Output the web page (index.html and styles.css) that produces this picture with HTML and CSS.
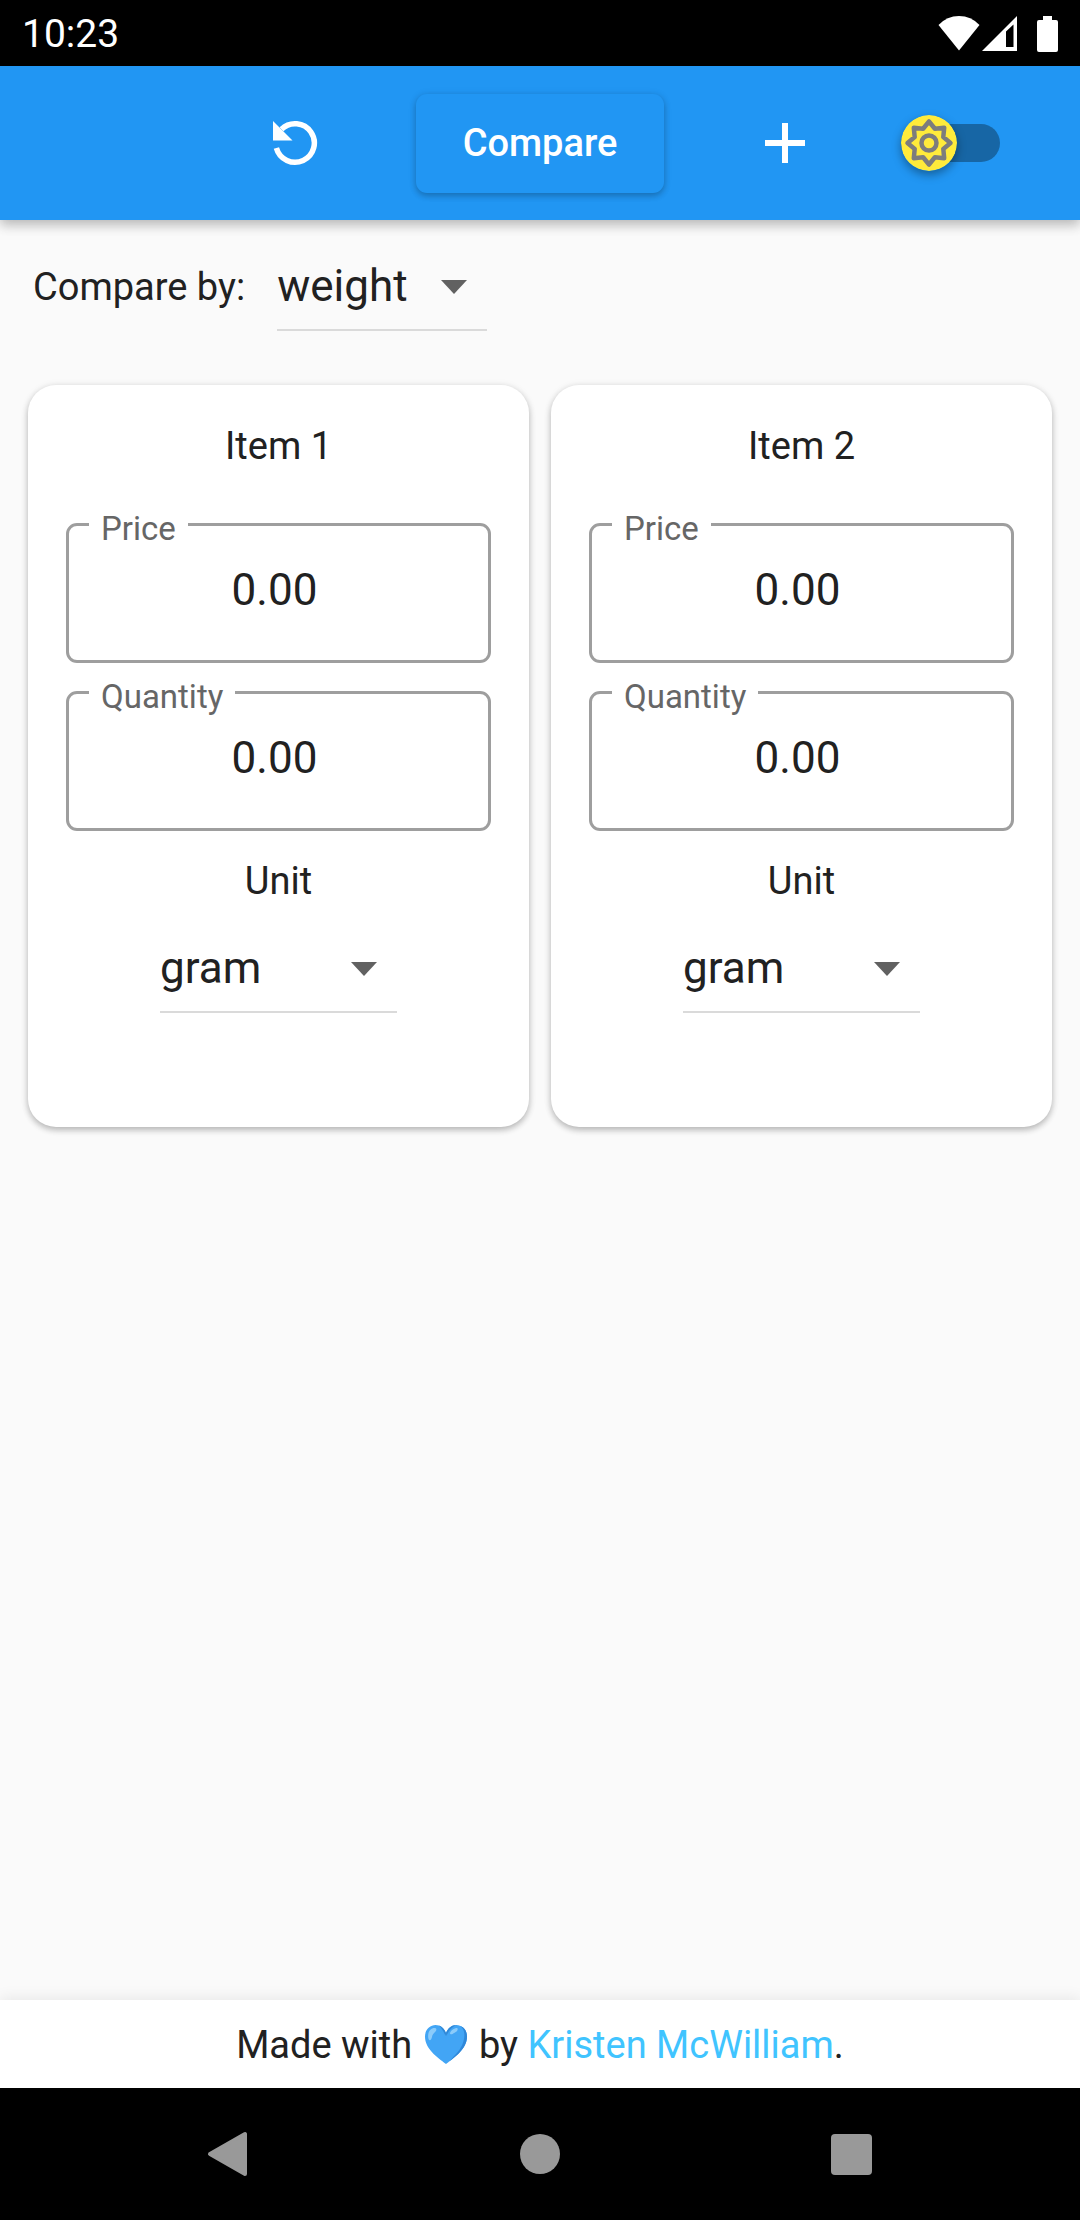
FILE: index.html
```html
<!DOCTYPE html>
<html lang="en">
<head>
  <meta charset="utf-8">
  <meta name="viewport" content="width=device-width, initial-scale=1">
  <title>Compare prices</title>
  <link rel="stylesheet" href="styles.css">
</head>
<body>
  <div class="status-bar">
    <time class="status-time">10:23</time>
    <svg class="status-icons" width="122" height="38" viewBox="0 0 122 38" fill="#fff" aria-hidden="true">
      <path d="M0.500 10Q9 1 21 1T41.500 10L21 35.500z"/>
      <path fill-rule="evenodd" d="M79 1v35H44zM68 16.500V32h7.500V9.500z"/>
      <path d="M105 1h9v4h4q2 0 2 2v28q0 2-2 2h-17q-2 0-2-2V7q0-2 2-2h4z"/>
    </svg>
  </div>

  <header class="app-bar">
    <div class="actions">
      <button class="icon-button" type="button" aria-label="Reset">
        <svg width="48" height="48" viewBox="0 0 48 48" aria-hidden="true">
          <path d="M10.500 10.200A19.300 19.300 0 1 1 5.400 29" fill="none" stroke="#fff" stroke-width="5.500"/>
          <path d="M2 2v19.500h19.500z" fill="#fff"/>
        </svg>
      </button>
      <button class="compare-button" type="button">Compare</button>
      <button class="icon-button" type="button" aria-label="Add item">
        <svg width="48" height="48" viewBox="0 0 48 48" aria-hidden="true">
          <path d="M24 4v40M4 24h40" fill="none" stroke="#fff" stroke-width="6"/>
        </svg>
      </button>
    </div>
    <label class="theme-switch">
      <input class="switch-input" type="checkbox" role="switch" aria-label="Dark mode">
      <svg class="switch-thumb" width="56" height="56" viewBox="-28 -28 56 56" aria-hidden="true">
        <circle r="28" fill="#ffeb3b"/>
        <g fill="none" stroke="#7d7d7d" stroke-width="4.500" stroke-linejoin="round">
          <path d="M0-21.500L5.900-14.300L15.200-15.200L14.300-5.900L21.500 0L14.300 5.900L15.200 15.200L5.900 14.300L0 21.500L-5.900 14.300L-15.200 15.200L-14.300 5.900L-21.500 0L-14.300-5.900L-15.200-15.200L-5.900-14.300z"/>
          <circle r="7.500"/>
        </g>
      </svg>
    </label>
  </header>

  <main class="content">
    <div class="compare-by">
      <label for="measure">Compare by:</label>
      <div class="dropdown dropdown-measure">
        <select id="measure"><option>weight</option><option>volume</option></select>
        <svg class="caret" width="26" height="14" viewBox="0 0 26 14" aria-hidden="true"><path d="M0 0h26L13 14z" fill="#616161"/></svg>
      </div>
    </div>

    <div class="cards">
      <section class="card">
        <h2 class="card-title">Item 1</h2>
        <div class="fields">
          <div class="field">
            <label for="price-1">Price</label>
            <input id="price-1" type="text" inputmode="decimal" value="0.00">
          </div>
          <div class="field">
            <label for="quantity-1">Quantity</label>
            <input id="quantity-1" type="text" inputmode="decimal" value="0.00">
          </div>
        </div>
        <label class="unit-label" for="unit-1">Unit</label>
        <div class="dropdown dropdown-unit">
          <select id="unit-1"><option>gram</option><option>kilogram</option></select>
          <svg class="caret" width="26" height="14" viewBox="0 0 26 14" aria-hidden="true"><path d="M0 0h26L13 14z" fill="#616161"/></svg>
        </div>
      </section>

      <section class="card">
        <h2 class="card-title">Item 2</h2>
        <div class="fields">
          <div class="field">
            <label for="price-2">Price</label>
            <input id="price-2" type="text" inputmode="decimal" value="0.00">
          </div>
          <div class="field">
            <label for="quantity-2">Quantity</label>
            <input id="quantity-2" type="text" inputmode="decimal" value="0.00">
          </div>
        </div>
        <label class="unit-label" for="unit-2">Unit</label>
        <div class="dropdown dropdown-unit">
          <select id="unit-2"><option>gram</option><option>kilogram</option></select>
          <svg class="caret" width="26" height="14" viewBox="0 0 26 14" aria-hidden="true"><path d="M0 0h26L13 14z" fill="#616161"/></svg>
        </div>
      </section>
    </div>
  </main>

  <footer class="credits">
    <p>Made with <svg class="heart" width="48" height="42" viewBox="0 0 48 42" role="img" aria-label="love">
        <path d="M24 40C15 33 3 25 3 12.500C3 5.500 8 1 13.500 1C18.500 1 22 4 24 9C26 4 29.500 1 34.500 1C40 1 45 5.500 45 12.500C45 25 33 33 24 40z" fill="#42a5f5"/>
        <path d="M38 2C46 7 42 22 34 30C30 34 28 37 24 40C33 33 45 25 45 12.500C45 7 42 3 38 2z" fill="#2f87d8"/>
        <path d="M24 9C22.500 5 20 2.500 17 1.500C20 5 22 8 23.500 12zM24 9C26 4 29.500 1 34.500 1C30 3 27 6 24.500 12z" fill="#3188d6"/>
        <path d="M12.500 4C8 4 5 9 6.500 15C7.500 17.500 9.500 16 10 13C10.500 10 12 9.500 13.500 7.500C15 5.500 14.500 4 12.500 4zM34.500 4C31.500 4.500 28 7 28 9.500C29 11.500 31 9.500 33 8.500C36 7 36.500 4 34.500 4z" fill="#8bcbfa"/>
      </svg> by <a href="#author">Kristen McWilliam</a>.</p>
  </footer>

  <nav class="system-nav" aria-label="System">
    <button type="button" aria-label="Back">
      <svg width="44" height="48" viewBox="0 0 44 48" aria-hidden="true"><path d="M4 24L39 4v40z" fill="#999" stroke="#999" stroke-width="4" stroke-linejoin="round"/></svg>
    </button>
    <button type="button" aria-label="Home">
      <svg width="44" height="48" viewBox="0 0 44 48" aria-hidden="true"><circle cx="22" cy="24" r="20" fill="#999"/></svg>
    </button>
    <button type="button" aria-label="Recent apps">
      <svg width="44" height="48" viewBox="0 0 44 48" aria-hidden="true"><rect x="1" y="4" width="41" height="41" rx="4" fill="#999"/></svg>
    </button>
  </nav>
</body>
</html>
```
FILE: styles.css
```css
*,
*::before,
*::after {
  box-sizing: border-box;
}

body {
  display: flex;
  flex-direction: column;
  min-height: 100vh;
  margin: 0;
  background: #fafafa;
  color: #212121;
  font: 400 38px/46px Roboto, "Liberation Sans", sans-serif;
}

button,
input,
select {
  margin: 0;
  padding: 0;
  border: 0;
  background: none;
  color: inherit;
  font: inherit;
}

svg {
  display: block;
}

/* Device status bar */
.status-bar {
  display: flex;
  justify-content: space-between;
  align-items: center;
  height: 66px;
  padding: 2px 20px 0 22px;
  background: #000;
  color: #fff;
}

.status-time {
  font-size: 39px;
}

/* App bar */
.app-bar {
  display: grid;
  grid-template-columns: 1fr auto 1fr;
  align-items: center;
  height: 154px;
  padding-right: 80px;
  padding-left: 80px;
  background: #2196f3;
  color: #fff;
  box-shadow: 0 5px 11px rgba(0, 0, 0, 0.2), 0 3px 14px rgba(0, 0, 0, 0.1);
}

.actions {
  display: flex;
  grid-column: 2;
  align-items: center;
  gap: 55px;
}

.icon-button {
  display: grid;
  place-items: center;
  width: 132px;
  height: 132px;
}

.compare-button {
  min-width: 248px;
  height: 99px;
  padding: 0 44px;
  border-radius: 11px;
  background: #2196f3;
  font-weight: 500;
  box-shadow: 0 3px 6px rgba(0, 0, 0, 0.2), 0 1px 8px rgba(0, 0, 0, 0.1);
}

.theme-switch {
  display: grid;
  justify-self: end;
  align-items: center;
  width: 99px;
}

.switch-input,
.switch-thumb {
  grid-area: 1 / 1;
}

.switch-input {
  appearance: none;
  width: 99px;
  height: 38px;
  border-radius: 19px;
  background: #1766a5;
}

.switch-thumb {
  border-radius: 50%;
  box-shadow: 0 4px 10px rgba(0, 0, 0, 0.36);
}

/* Drop-downs */
.dropdown {
  display: grid;
  align-items: center;
}

.dropdown select,
.caret {
  grid-area: 1 / 1;
}

.dropdown select {
  appearance: none;
  width: 100%;
  height: 88px;
  padding-right: 50px;
  border-bottom: 2px solid #dadada;
  border-radius: 0;
  font-size: 44px;
  line-height: 60px;
}

.caret {
  justify-self: end;
  margin-right: 20px;
  pointer-events: none;
}

.dropdown-measure {
  width: 210px;
}

.dropdown-unit {
  width: 237px;
  margin-top: 21px;
}

/* Content */
.content {
  flex: 1;
  padding: 23px 28px;
}

.compare-by {
  display: flex;
  align-items: center;
  gap: 32px;
  padding-left: 5px;
}

.cards {
  display: grid;
  grid-template-columns: 1fr 1fr;
  gap: 22px;
  margin-top: 54px;
}

.card {
  display: flex;
  flex-direction: column;
  align-items: center;
  padding: 38px 38px 114px;
  border-radius: 28px;
  background: #fff;
  box-shadow: 0 3px 6px rgba(0, 0, 0, 0.24), 0 1px 8px rgba(0, 0, 0, 0.08);
}

.card-title {
  margin: 0;
  font-size: 38px;
  font-weight: 400;
}

.fields {
  display: grid;
  gap: 28px;
  width: 100%;
  margin: 54px 0 27px;
}

.field {
  position: relative;
  border: 3px solid #9e9e9e;
  border-radius: 11px;
}

.field label {
  position: absolute;
  top: -16px;
  left: 20px;
  padding: 0 12px;
  background: #fff;
  color: #666;
  font-size: 33px;
  line-height: 38px;
}

.field input {
  display: block;
  width: 100%;
  height: 134px;
  padding: 0 8px 6px 0;
  font-size: 44px;
  text-align: center;
}

/* Footer */
.credits {
  padding: 22px 21px 20px;
  background: #fff;
  text-align: center;
  box-shadow: 0 -2px 14px rgba(0, 0, 0, 0.08);
}

.credits p {
  margin: 0;
}

.credits a {
  color: #40c4ff;
  text-decoration: none;
}

.heart {
  display: inline-block;
  vertical-align: -8px;
}

/* Device navigation bar */
.system-nav {
  display: flex;
  justify-content: center;
  gap: 180px;
  height: 132px;
  background: #000;
}

.system-nav button {
  display: grid;
  place-items: center;
  width: 132px;
}
```
